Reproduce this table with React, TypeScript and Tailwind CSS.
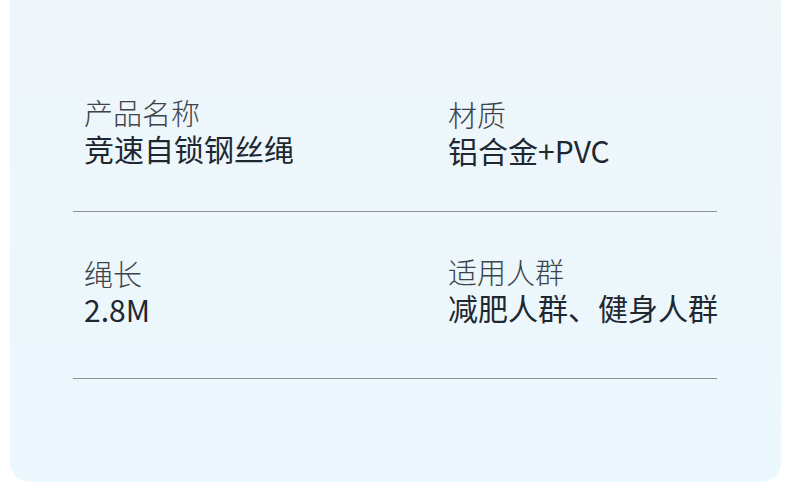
import React from 'react';

type Spec = { label: string; value: string };

const rows: { items: [Spec, Spec]; top: string; bottom: string; shift: 'left' | 'right' }[] = [
  {
    items: [
      { label: '产品名称', value: '竞速自锁钢丝绳' },
      { label: '材质', value: '铝合金+PVC' },
    ],
    top: 'pt-[94px]',
    bottom: 'pb-[43px]',
    shift: 'right',
  },
  {
    items: [
      { label: '绳长', value: '2.8M' },
      { label: '适用人群', value: '减肥人群、健身人群' },
    ],
    top: 'pt-[41px]',
    bottom: 'pb-[51px]',
    shift: 'left',
  },
];

const Cell: React.FC<{ spec: Spec; className?: string }> = ({ spec, className }) => (
  <div className={`whitespace-nowrap ${className ?? ''}`}>
    <div className="text-[29px] leading-[36px] text-[#3d4349] font-light">{spec.label}</div>
    <div className="text-[30px] leading-[36px] text-[#1f2831] font-normal">{spec.value}</div>
  </div>
);

export default function App() {
  return (
    <div
      className="w-[790px] h-[498px] bg-white overflow-hidden"
      style={{ fontFamily: '"Noto Sans CJK SC", "Noto Sans", sans-serif' }}
    >
      <div className="ml-[10px] w-[771px] h-[482px] rounded-b-[20px] bg-gradient-to-b from-[#eef6fa] to-[#ebf8fe]">
        <div className="ml-[63px] w-[644px]">
          {rows.map((row, i) => (
            <div key={i} className={`flex pl-[11px] border-b border-[#8c9297] ${row.top} ${row.bottom}`}>
              <Cell spec={row.items[0]} className={`w-[364px] shrink-0 ${row.shift === 'left' ? 'pt-[2px]' : ''}`} />
              <Cell spec={row.items[1]} className={row.shift === 'right' ? 'pt-[2px]' : ''} />
            </div>
          ))}
        </div>
      </div>
    </div>
  );
}
